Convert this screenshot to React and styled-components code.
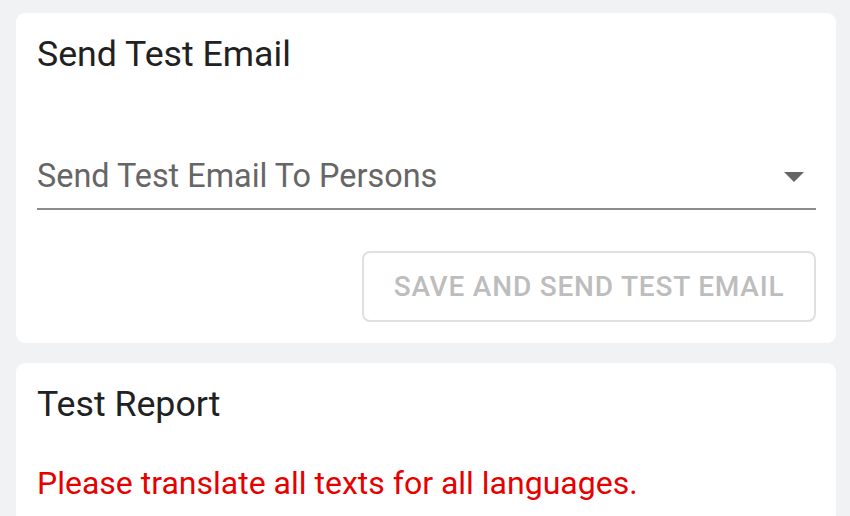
import React from 'react';
import styled, { createGlobalStyle } from 'styled-components';

const GlobalStyle = createGlobalStyle`
  html, body {
    margin: 0;
    padding: 0;
    background: #f1f2f4;
    font-family: Roboto, "Liberation Sans", sans-serif;
  }
`

const Page = styled.div`
  display: flex;
  flex-direction: column;
  gap: 20px;
  padding: 13px 14px 0 16px;
`

const Card = styled.div`
  background: #fff;
  border-radius: 9px;
  padding: 21px 20px 21px 21px;
`

const CardTitle = styled.div`
  font-size: 35.7px;
  line-height: 40px;
  color: #212121;
`

const SelectField = styled.div`
  margin-top: 83px;
  padding-bottom: 13px;
  display: flex;
  align-items: center;
  justify-content: space-between;
  border-bottom: 2px solid #8c8c8c;
`

const SelectLabel = styled.div`
  font-size: 32.4px;
  line-height: 38px;
  color: #666;
`

const Arrow = styled.div`
  width: 0;
  height: 0;
  border-left: 10px solid transparent;
  border-right: 10px solid transparent;
  border-top: 10px solid #666;
  margin-right: 12px;
  margin-top: 2px;
`

const Actions = styled.div`
  display: flex;
  justify-content: flex-end;
  margin-top: 41px;
`

const OutlineButton = styled.button`
  width: 454px;
  height: 71px;
  background: #fff;
  border: 2px solid #e0e0e0;
  border-radius: 8px;
  font-family: inherit;
  font-size: 28px;
  font-weight: 500;
  letter-spacing: 0.8px;
  text-transform: uppercase;
  color: #bdbdbd;
  cursor: default;
`

const ErrorText = styled.div`
  margin-top: 40px;
  font-size: 32px;
  line-height: 38px;
  color: #e60000;
`

export default function App() {
  return (
    <>
      <GlobalStyle />
      <Page>
        <Card>
          <CardTitle>Send Test Email</CardTitle>
          <SelectField>
            <SelectLabel>Send Test Email To Persons</SelectLabel>
            <Arrow />
          </SelectField>
          <Actions>
            <OutlineButton disabled>Save and send test email</OutlineButton>
          </Actions>
        </Card>
        <Card>
          <CardTitle>Test Report</CardTitle>
          <ErrorText>Please translate all texts for all languages.</ErrorText>
        </Card>
      </Page>
    </>
  )
}
